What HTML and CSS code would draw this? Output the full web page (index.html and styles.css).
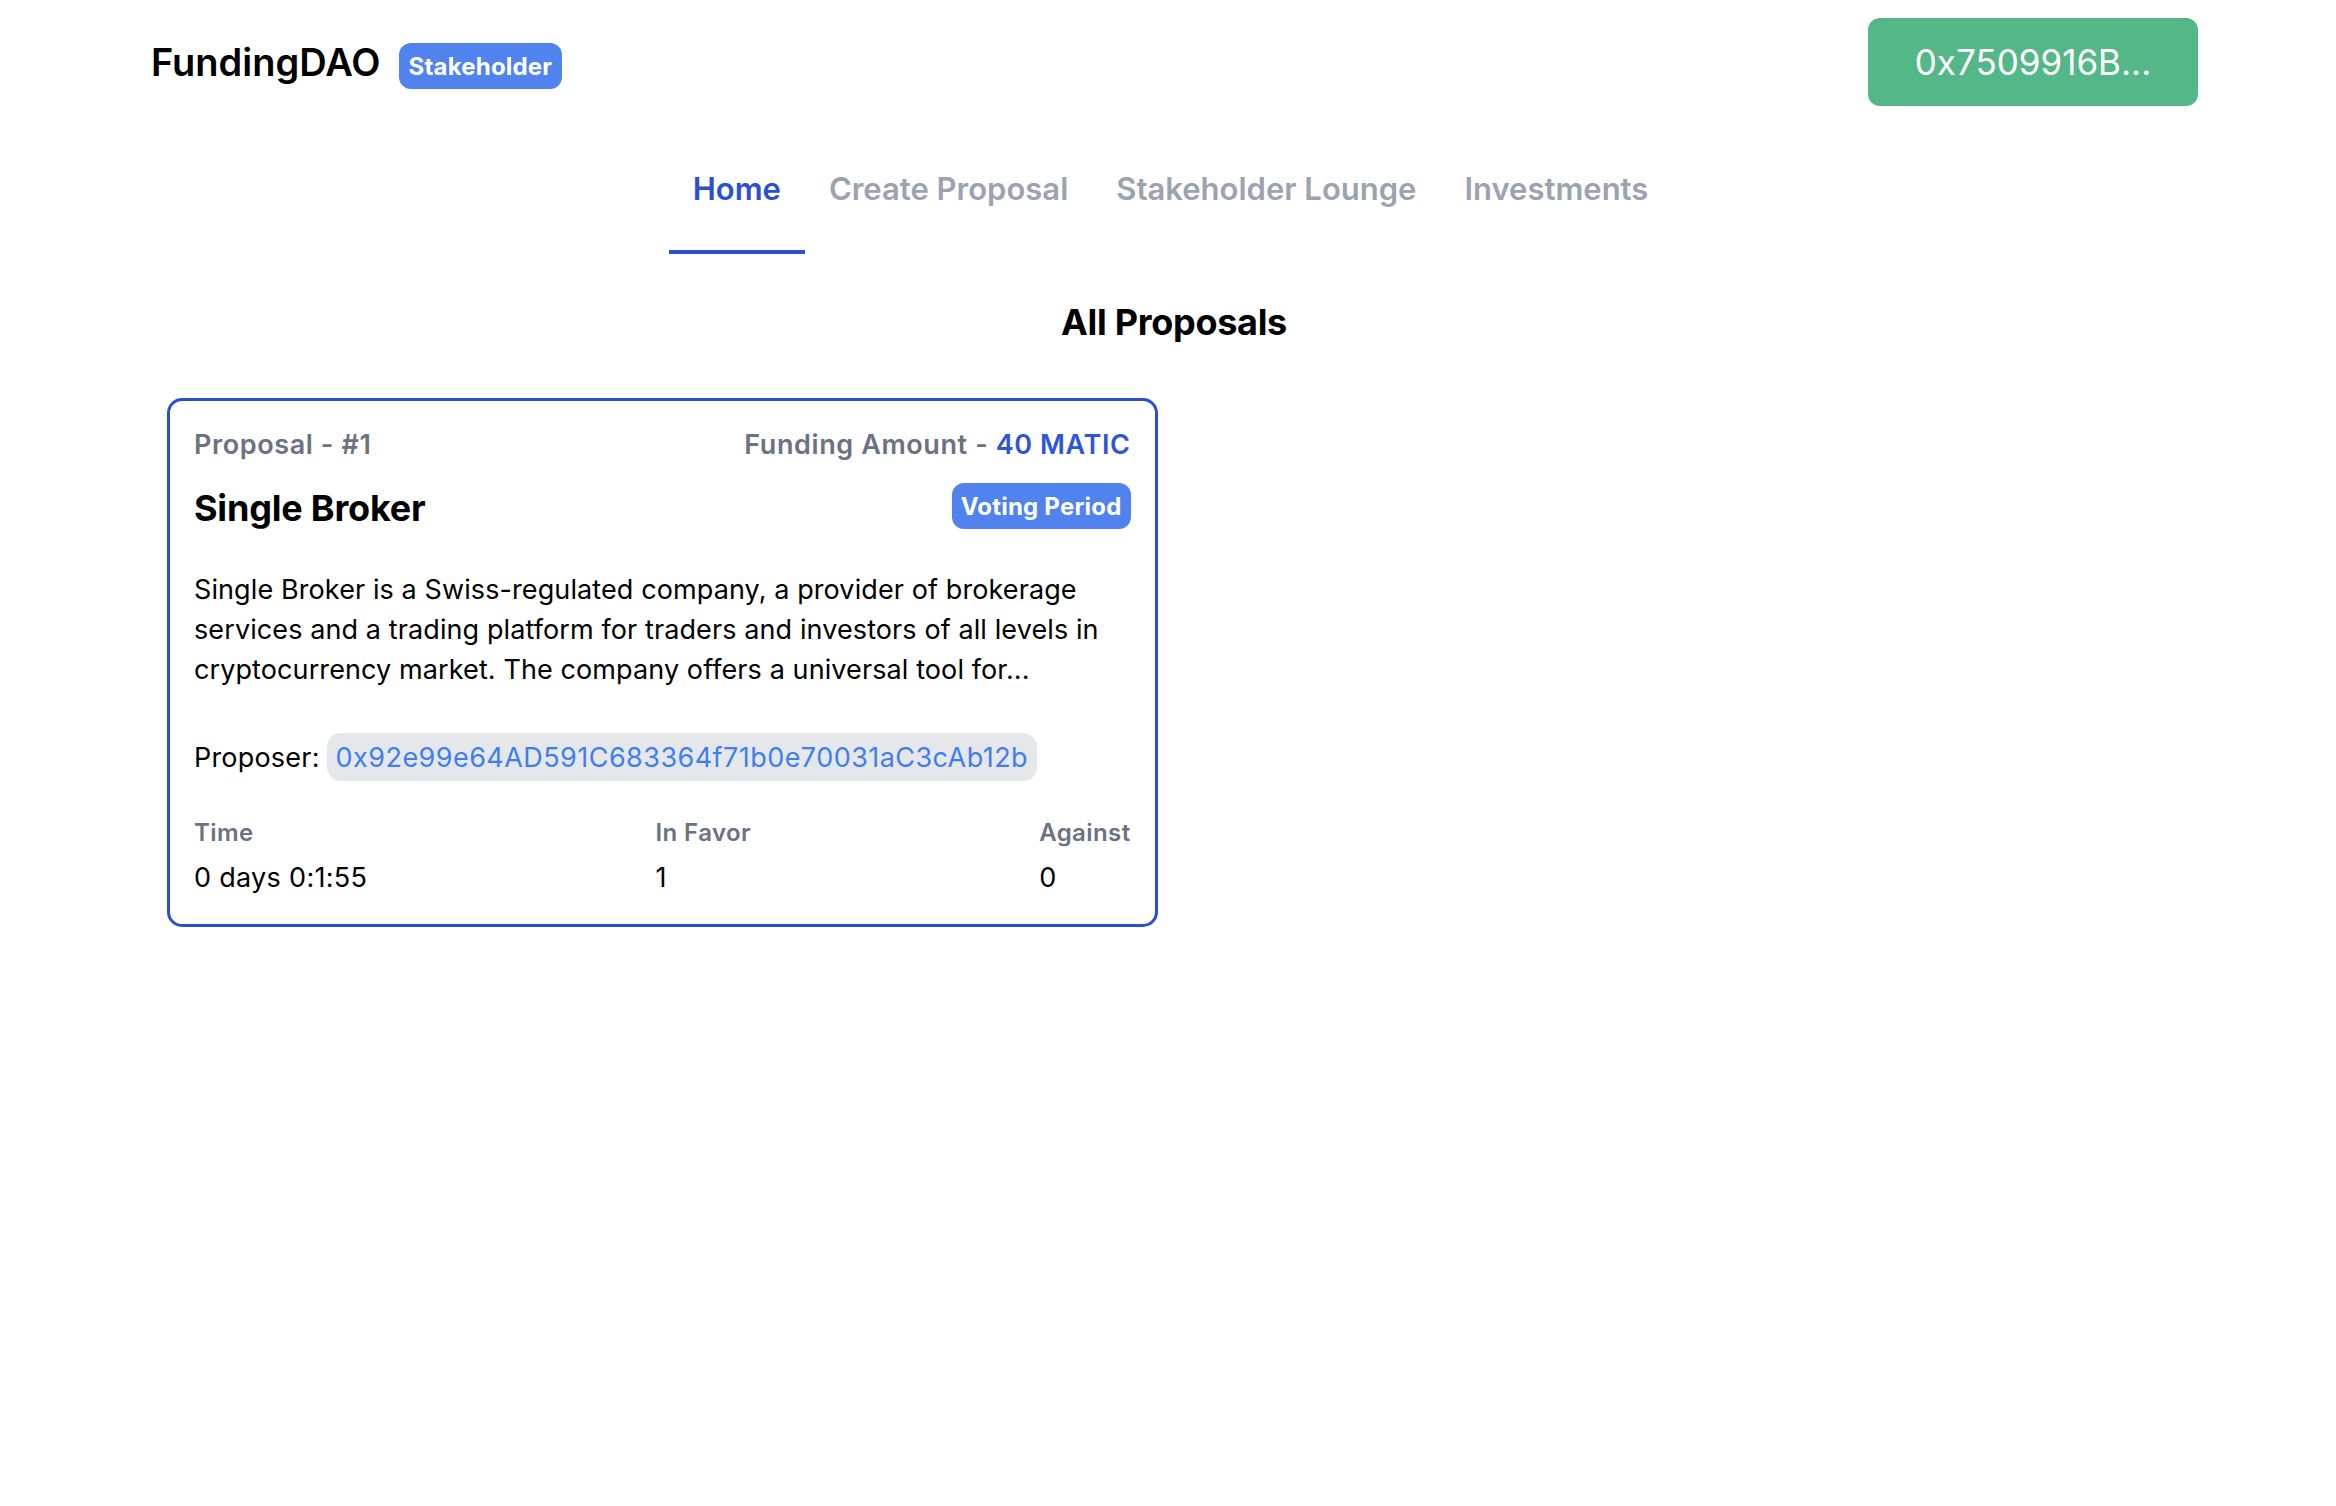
FILE: index.html
```html
<!DOCTYPE html>
<html lang="en">
<head>
<meta charset="utf-8">
<title>FundingDAO</title>
<link rel="stylesheet" href="styles.css">
</head>
<body>
<header class="topbar">
  <div class="brand">
    <span class="brand-name">FundingDAO</span>
    <span class="role-badge">Stakeholder</span>
  </div>
  <button class="wallet-btn">0x7509916B...</button>
</header>
<main class="main">
  <nav class="tabs">
    <a class="tab active">Home</a>
    <a class="tab">Create Proposal</a>
    <a class="tab">Stakeholder Lounge</a>
    <a class="tab">Investments</a>
  </nav>
  <h1 class="page-title">All Proposals</h1>
  <section class="grid">
    <article class="card">
      <div class="card-top">
        <span class="muted">Proposal - #1</span>
        <span class="muted">Funding Amount - <span class="amount">40 MATIC</span></span>
      </div>
      <div class="card-head">
        <h2 class="card-title">Single Broker</h2>
        <span class="status-badge">Voting Period</span>
      </div>
      <p class="desc">Single Broker is a Swiss-regulated company, a provider of brokerage services and a trading platform for traders and investors of all levels in cryptocurrency market. The company offers a universal tool for...</p>
      <div class="proposer">
        <span>Proposer:</span>
        <span class="address">0x92e99e64AD591C683364f71b0e70031aC3cAb12b</span>
      </div>
      <div class="stats">
        <div class="stat">
          <div class="stat-label">Time</div>
          <div class="stat-value">0 days 0:1:55</div>
        </div>
        <div class="stat">
          <div class="stat-label">In Favor</div>
          <div class="stat-value">1</div>
        </div>
        <div class="stat">
          <div class="stat-label">Against</div>
          <div class="stat-value">0</div>
        </div>
      </div>
    </article>
  </section>
</main>
</body>
</html>
```

FILE: styles.css
```css
* { box-sizing: border-box; }
html, body {
  margin: 0;
  padding: 0;
  background: #ffffff;
  font-family: Inter, "Noto Sans", "Liberation Sans", sans-serif;
  color: #000;
}

.topbar {
  display: flex;
  align-items: center;
  justify-content: space-between;
  padding: 18px 138px 0 151px;
}
.brand {
  display: flex;
  align-items: center;
  gap: 18px;
}
.brand-name {
  font-size: 38px;
  font-weight: 600;
  letter-spacing: 0;
}
.role-badge {
  display: inline-flex;
  align-items: center;
  height: 46px;
  margin-top: 8px;
  padding: 0 10px;
  border-radius: 12px;
  background: #5083ee;
  color: #fff;
  font-size: 24px;
  font-weight: 700;
  letter-spacing: 0.2px;
}
.wallet-btn {
  width: 330px;
  height: 88px;
  border: none;
  border-radius: 12px;
  background: #54b787;
  color: #fff;
  font-family: inherit;
  font-size: 35px;
  font-weight: 400;
}

.main {
  padding: 0 162px 0 167px;
}
.tabs {
  display: flex;
  justify-content: center;
  margin-top: 30px;
}
.tab {
  padding: 32px 24px 40px;
  font-size: 31px;
  line-height: 42px;
  font-weight: 600;
  color: #9ca3af;
  border-bottom: 4px solid transparent;
  letter-spacing: 0;
}
.tab.active {
  color: #2a4fd2;
  border-bottom-color: #2a4fd2;
}
.page-title {
  margin: 41px 0 0;
  padding-left: 7px;
  text-align: center;
  font-size: 36px;
  line-height: 54px;
  font-weight: 700;
  letter-spacing: -0.3px;
}
.grid {
  display: grid;
  grid-template-columns: 1fr 1fr;
  column-gap: 26px;
  margin-top: 49px;
}
.card {
  border: 3.5px solid #2a4fd2;
  border-radius: 15px;
  padding: 24px 24px 26px;
}
.card-top {
  display: flex;
  justify-content: space-between;
  font-size: 27px;
  line-height: 40px;
  font-weight: 600;
  letter-spacing: 0.6px;
}
.muted { color: #6b7280; }
.amount { color: #2f56d6; }
.card-head {
  display: flex;
  justify-content: space-between;
  align-items: center;
  margin-top: 16px;
}
.card-title {
  margin: 0;
  font-size: 36px;
  line-height: 54px;
  font-weight: 700;
  letter-spacing: -0.2px;
}
.status-badge {
  display: inline-flex;
  align-items: center;
  height: 46px;
  margin-top: -4px;
  padding: 0 9px;
  border-radius: 12px;
  background: #5083ee;
  color: #fff;
  font-size: 24px;
  font-weight: 700;
  letter-spacing: 0.2px;
}
.desc {
  margin: 35px 0 0;
  font-size: 27px;
  line-height: 40px;
  letter-spacing: 0.1px;
}
.proposer {
  display: flex;
  align-items: center;
  gap: 7px;
  margin-top: 43px;
  font-size: 27px;
  letter-spacing: 0.2px;
}
.address {
  display: inline-flex;
  align-items: center;
  height: 48px;
  padding: 0 9px;
  border-radius: 14px;
  background: #e5e7eb;
  color: #3f7fec;
  letter-spacing: 0.45px;
}
.stats {
  display: flex;
  justify-content: space-between;
  margin-top: 34px;
}
.stat-label {
  font-size: 24px;
  line-height: 36px;
  font-weight: 600;
  color: #6b7280;
  letter-spacing: 0.4px;
}
.stat-value {
  margin-top: 7px;
  font-size: 27px;
  line-height: 40px;
  letter-spacing: 0.3px;
}
```
